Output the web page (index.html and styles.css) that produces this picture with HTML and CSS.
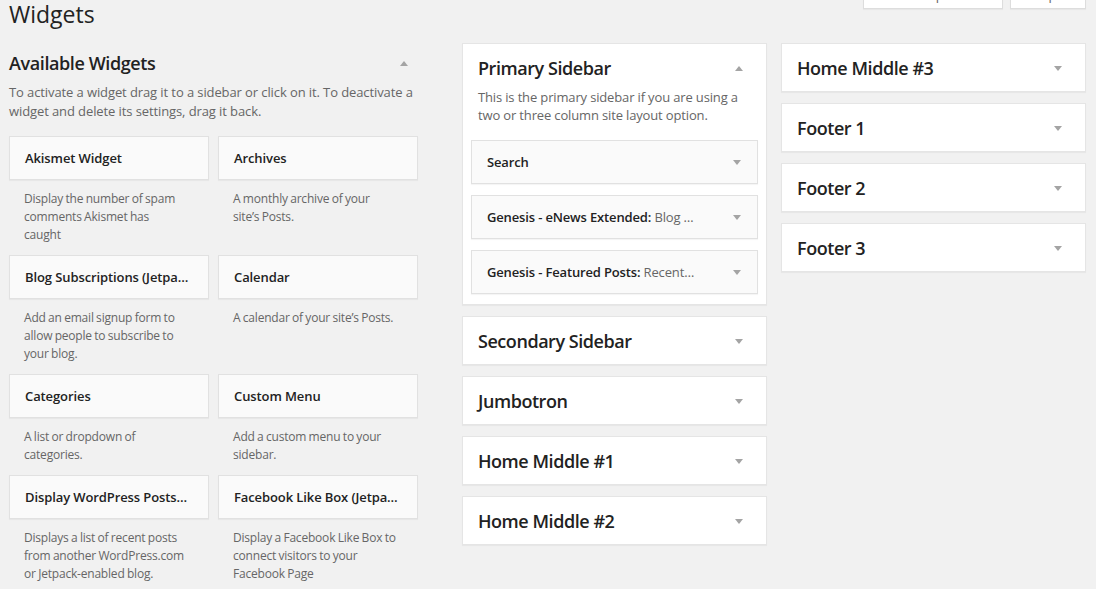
FILE: index.html
```html
<!DOCTYPE html>
<html lang="en">
<head>
    <meta charset="UTF-8">
    <title>Widgets</title>
    <link rel="stylesheet" href="styles.css">
</head>
<body>
    <div class="wrap">
        <header class="page-head">
            <h1>Widgets</h1>
            <div class="screen-links">
                <button class="screen-tab tab-options">Screen Options <span class="tab-caret"></span></button>
                <button class="screen-tab tab-help">Help <span class="tab-caret"></span></button>
            </div>
        </header>

        <main class="widgets-area">
            <!-- Available widgets -->
            <section class="available">
                <div class="available-head">
                    <h2>Available Widgets</h2>
                    <span class="arrow arrow-up"></span>
                </div>
                <p class="available-desc">To activate a widget drag it to a sidebar or click on it. To deactivate a widget and delete its settings, drag it back.</p>
                <div class="widget-grid">
                    <div class="widget-item">
                        <div class="widget-title">Akismet Widget</div>
                        <div class="widget-desc">Display the number of spam comments Akismet has caught</div>
                    </div>
                    <div class="widget-item">
                        <div class="widget-title">Archives</div>
                        <div class="widget-desc">A monthly archive of your site’s Posts.</div>
                    </div>
                    <div class="widget-item">
                        <div class="widget-title">Blog Subscriptions (Jetpa…</div>
                        <div class="widget-desc">Add an email signup form to allow people to subscribe to your blog.</div>
                    </div>
                    <div class="widget-item">
                        <div class="widget-title">Calendar</div>
                        <div class="widget-desc">A calendar of your site’s Posts.</div>
                    </div>
                    <div class="widget-item">
                        <div class="widget-title">Categories</div>
                        <div class="widget-desc">A list or dropdown of categories.</div>
                    </div>
                    <div class="widget-item">
                        <div class="widget-title">Custom Menu</div>
                        <div class="widget-desc">Add a custom menu to your sidebar.</div>
                    </div>
                    <div class="widget-item">
                        <div class="widget-title">Display WordPress Posts…</div>
                        <div class="widget-desc">Displays a list of recent posts from another WordPress.com or Jetpack-enabled blog.</div>
                    </div>
                    <div class="widget-item">
                        <div class="widget-title">Facebook Like Box (Jetpa…</div>
                        <div class="widget-desc">Display a Facebook Like Box to connect visitors to your Facebook Page</div>
                    </div>
                </div>
            </section>

            <!-- Sidebars, first column -->
            <section class="sidebar-col">
                <div class="sidebar open">
                    <div class="sidebar-name">
                        <h3>Primary Sidebar</h3>
                        <span class="arrow arrow-up"></span>
                    </div>
                    <p class="sidebar-desc">This is the primary sidebar if you are using a two or three column site layout option.</p>
                    <div class="placed">
                        <span class="placed-title">Search</span>
                        <span class="arrow arrow-down"></span>
                    </div>
                    <div class="placed">
                        <span class="placed-title">Genesis - eNews Extended:<span class="in-title"> Blog …</span></span>
                        <span class="arrow arrow-down"></span>
                    </div>
                    <div class="placed">
                        <span class="placed-title">Genesis - Featured Posts:<span class="in-title"> Recent…</span></span>
                        <span class="arrow arrow-down"></span>
                    </div>
                </div>
                <div class="sidebar">
                    <div class="sidebar-name"><h3>Secondary Sidebar</h3><span class="arrow arrow-down"></span></div>
                </div>
                <div class="sidebar">
                    <div class="sidebar-name"><h3>Jumbotron</h3><span class="arrow arrow-down"></span></div>
                </div>
                <div class="sidebar">
                    <div class="sidebar-name"><h3>Home Middle #1</h3><span class="arrow arrow-down"></span></div>
                </div>
                <div class="sidebar">
                    <div class="sidebar-name"><h3>Home Middle #2</h3><span class="arrow arrow-down"></span></div>
                </div>
            </section>

            <!-- Sidebars, second column -->
            <section class="sidebar-col">
                <div class="sidebar">
                    <div class="sidebar-name"><h3>Home Middle #3</h3><span class="arrow arrow-down"></span></div>
                </div>
                <div class="sidebar">
                    <div class="sidebar-name"><h3>Footer 1</h3><span class="arrow arrow-down"></span></div>
                </div>
                <div class="sidebar">
                    <div class="sidebar-name"><h3>Footer 2</h3><span class="arrow arrow-down"></span></div>
                </div>
                <div class="sidebar">
                    <div class="sidebar-name"><h3>Footer 3</h3><span class="arrow arrow-down"></span></div>
                </div>
            </section>
        </main>
    </div>
</body>
</html>
```

FILE: styles.css
```css
/* Reset default styles */
* {
    margin: 0;
    padding: 0;
    box-sizing: border-box;
}
body {
    font-family: 'Open Sans', 'Noto Sans', sans-serif;
    background-color: #f1f1f1;
    color: #222;
    font-size: 13px;
    overflow: hidden;
}
.wrap {
    padding: 0 10px 0 9px;
}

/* Page header */
.page-head {
    display: flex;
    justify-content: space-between;
    align-items: flex-start;
    margin-bottom: 14px;
}
.page-head h1 {
    font-size: 23px;
    font-weight: 400;
    line-height: 29px;
    color: #222;
}
.screen-links {
    display: flex;
    gap: 7px;
    margin-top: -19px;
}
.screen-tab {
    height: 28px;
    background-color: #fff;
    border: 1px solid #ddd;
    box-shadow: 0 1px 1px rgba(0,0,0,0.04);
    font-family: inherit;
    font-size: 13px;
    line-height: 26px;
    color: #666;
}
.tab-options {
    width: 140px;
}
.tab-help {
    width: 76px;
}
.tab-caret {
    display: inline-block;
    border-left: 4px solid transparent;
    border-right: 4px solid transparent;
    border-top: 5px solid #aaa;
}

/* Columns */
.widgets-area {
    display: flex;
    align-items: flex-start;
}
.available {
    width: 410px;
    margin-right: 43px;
    padding-top: 8px;
}
.sidebar-col {
    width: 305px;
    display: flex;
    flex-direction: column;
    gap: 11px;
}
.sidebar-col + .sidebar-col {
    margin-left: 14px;
}

/* Arrows */
.arrow {
    display: block;
    width: 0;
    height: 0;
    border-left: 4px solid transparent;
    border-right: 4px solid transparent;
}
.arrow-down {
    border-top: 5px solid #a4a4a4;
}
.arrow-up {
    border-bottom: 5px solid #a4a4a4;
}

/* Available widgets */
.available-head {
    display: flex;
    justify-content: space-between;
    align-items: center;
    padding-right: 11px;
}
.available-head h2 {
    font-size: 18px;
    font-weight: 600;
    line-height: 24px;
    letter-spacing: -0.4px;
    color: #222;
}
.available-desc {
    margin-top: 8px;
    line-height: 19px;
    letter-spacing: -0.1px;
    color: #666;
}
.widget-grid {
    display: grid;
    grid-template-columns: 200px 200px;
    column-gap: 9px;
    margin-top: 15px;
}
.widget-title {
    height: 44px;
    padding: 0 15px;
    background-color: #fafafa;
    border: 1px solid #e1e1e1;
    box-shadow: 0 1px 1px rgba(0,0,0,0.04);
    font-weight: 600;
    line-height: 42px;
    letter-spacing: -0.1px;
    color: #222;
    white-space: nowrap;
    overflow: hidden;
}
.widget-desc {
    padding: 10px 21.5px 11px 15px;
    font-size: 12px;
    line-height: 18px;
    letter-spacing: -0.2px;
    word-spacing: -0.5px;
    color: #666;
}
/* right hand column wraps a touch wider */
.widget-item:nth-child(even) .widget-desc {
    padding-right: 20.5px;
}

/* Sidebars */
.sidebar {
    background-color: #fff;
    border: 1px solid #e5e5e5;
    box-shadow: 0 1px 1px rgba(0,0,0,0.04);
}
.sidebar.open {
    padding-bottom: 10px;
}
.sidebar-name {
    display: flex;
    justify-content: space-between;
    align-items: center;
    padding: 12px 23px 11px 15px;
}
.sidebar-name h3 {
    font-size: 18px;
    font-weight: 600;
    line-height: 24px;
    letter-spacing: -0.45px;
    color: #222;
}
.sidebar-desc {
    margin-top: -3px;
    padding: 0 15px 16px;
    line-height: 18px;
    letter-spacing: -0.15px;
    color: #666;
}
.placed {
    display: flex;
    justify-content: space-between;
    align-items: center;
    height: 44px;
    margin: 0 8px 11px;
    padding: 0 16px 0 15px;
    background-color: #fafafa;
    border: 1px solid #e1e1e1;
    box-shadow: 0 1px 1px rgba(0,0,0,0.04);
}
.placed:last-child {
    margin-bottom: 0;
}
.placed-title {
    font-weight: 600;
    letter-spacing: -0.15px;
    color: #222;
    white-space: nowrap;
}
.in-title {
    font-weight: 400;
    color: #666;
}
```
